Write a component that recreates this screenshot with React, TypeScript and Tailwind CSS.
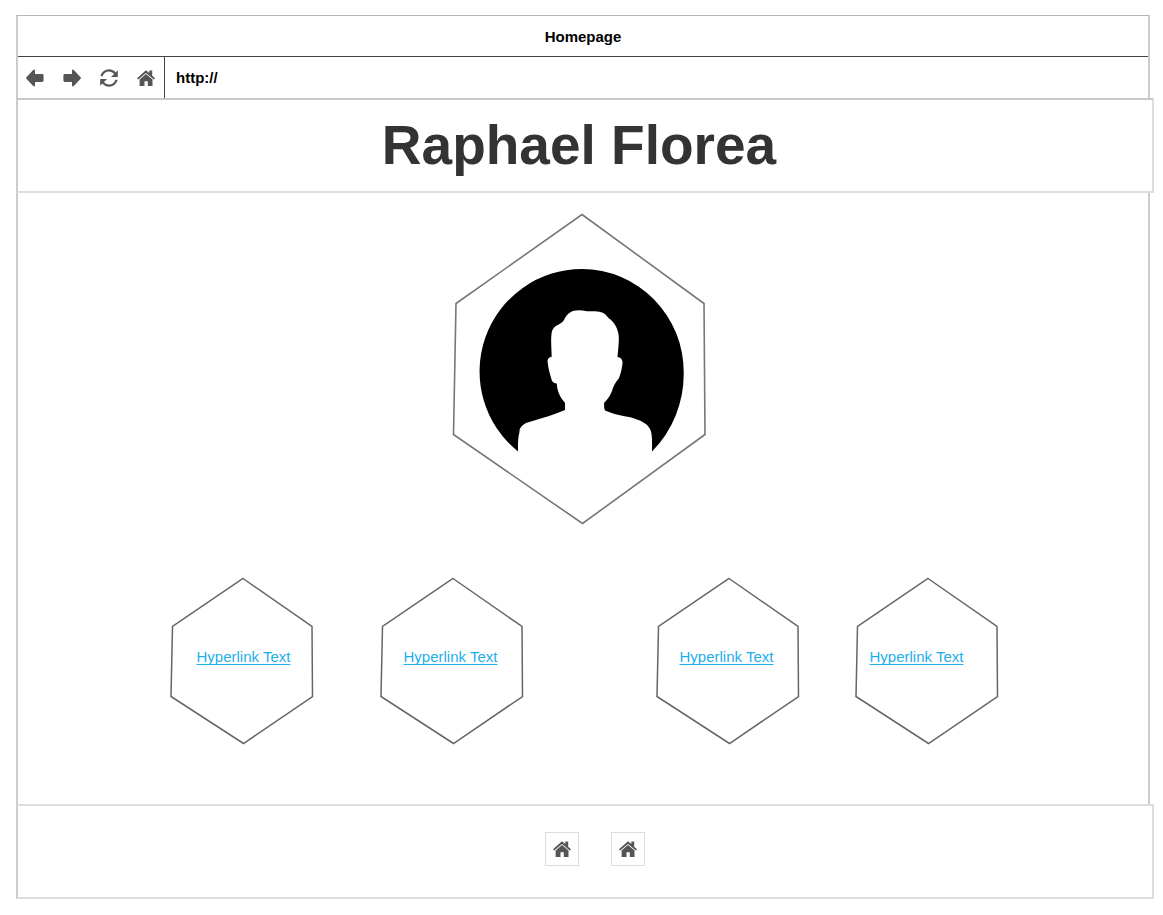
import React from "react";

type IconProps = { className?: string };

function ArrowIcon({ className }: IconProps) {
  return (
    <svg viewBox="0 0 18 18" className={className} fill="currentColor" aria-hidden="true">
      <path d="M.4 8.200 7.200.9Q8.800-.2 9 1.700V5H16.200a1.400 1.400 0 0 1 1.400 1.400V11.600a1.400 1.400 0 0 1-1.400 1.400H9v3.300Q8.800 18.200 7.200 17.100L.4 9.800Q-.2 9 .4 8.200z" />
    </svg>
  );
}

function RefreshIcon({ className }: IconProps) {
  return (
    <svg viewBox="0 0 18 18" className={className} aria-hidden="true">
      <g fill="none" stroke="currentColor" strokeWidth="2.200">
        <path d="M1.400 7.200C3 3 6 1.400 9 1.400S13.500 2.400 15.300 4.600" />
        <path d="M16.600 10.800C15 15 12 16.600 9 16.600S4.500 15.600 2.700 13.400" />
      </g>
      <path fill="currentColor" d="M17.800 1.200V8H11zM.2 16.800V10H7z" />
    </svg>
  );
}

function HomeIcon({ className }: IconProps) {
  return (
    <svg viewBox="0 0 18 18" className={className} fill="currentColor" aria-hidden="true">
      <path d="M9 1.200 12.300 4.100V1.500h2.900v5.200L18 9.200l-1.200 1.400L9 3.900l-7.800 6.700L0 9.200z" />
      <path d="M9 5 15.500 10.600V17H10.800V12.200H7.500V17H2.600v-6.400z" />
    </svg>
  );
}

function Avatar() {
  return (
    <svg viewBox="0 0 256 312" className="h-78 w-64" role="img" aria-label="Profile">
      <path
        d="M130 1.500 252 90.500 253 221.500 130.500 310.500 1.500 221.500 4 90.500z"
        fill="none"
        stroke="#777"
        strokeWidth="1.600"
      />
      <path d="M66 238.500A102.500 102.500 0 0 1 130 56A102 103 0 0 1 231.700 160A110 110 0 0 1 200 238.500C200 231 200.500 222 198.500 217 196 211 190 208 181 205 174 203 166 203 153 197.500 151.500 194 152.500 193 152 190 156 186 158.500 182 160 178 162 171 165 168 167 165 169 160 170.500 153 170.500 149Q170 144.500 165.500 144C166 137 167.500 127 166.500 121 165 113 161 108 156.500 105 151 97 144 98.500 135 98.300 123 95.500 116 98 112 107 108 113 101 111 99.500 121 98.700 127 99.500 136 99.700 143.700Q96 144 95.500 148C96 155 98 161 100 168Q102 170.500 104.700 170.500C105.500 180 109 185.500 113 189.700V197C102 201.500 91 205 79 208.500 71 210 67 215 67.500 219 65.800 225 66 232 66 238.500Z" />
    </svg>
  );
}

function HexLink({ className, linkClass }: { className: string; linkClass: string }) {
  return (
    <div className={`grid h-42 w-36 shrink-0 ${className}`}>
      <svg viewBox="0 0 144 168" className="col-start-1 row-start-1 h-42 w-36" aria-hidden="true">
        <path
          d="M73 1.500 142 49.500 142.500 119.500 73.500 166.500 1 119.500 2.500 49.500z"
          fill="none"
          stroke="#666"
          strokeWidth="1.500"
        />
      </svg>
      <a
        href="#"
        className={`col-start-1 row-start-1 mt-[70px] self-start justify-self-start text-[15px] leading-5 text-[#1eaeeb] underline underline-offset-2 [text-decoration-skip-ink:none] ${linkClass}`}
      >
        Hyperlink Text
      </a>
    </div>
  );
}

const navButton = "grid w-9 place-items-center";
const panel = "-mr-[6px] -ml-[2px] h-[95px] border-2 border-[#ddd] border-l-[#ccc] bg-white";

export default function App() {
  return (
    <div className="min-h-screen bg-white pt-[15px] pr-[13px] pb-4 pl-4 font-['Liberation_Sans',Arial,sans-serif] text-black">
      <div className="border-x-2 border-t border-x-[#ccc] border-t-[#b5b5b5]">
        <div className="flex h-10 items-center justify-center pt-0.5 text-[15px] font-bold">Homepage</div>
        <div className="flex h-[42px] border-t border-[#444]">
          <nav className="-ml-px flex gap-px border-r border-[#444] pt-px text-[#555]">
            <button type="button" aria-label="Back" className={navButton}>
              <ArrowIcon className="size-[18px]" />
            </button>
            <button type="button" aria-label="Forward" className={navButton}>
              <ArrowIcon className="size-[18px] rotate-180" />
            </button>
            <button type="button" aria-label="Reload" className={navButton}>
              <RefreshIcon className="size-[18px]" />
            </button>
            <button type="button" aria-label="Home" className={navButton}>
              <HomeIcon className="size-[18px]" />
            </button>
          </nav>
          <input
            type="text"
            aria-label="Address"
            defaultValue="http://"
            className="min-w-0 flex-1 px-[11px] pt-0.5 text-[15px] font-bold outline-none"
          />
        </div>

        <header className={`${panel} flex items-center justify-center border-t-[#c8c8c8]`}>
          <h1 className="pr-3 text-[55px] leading-none font-bold text-[#333]">Raphael Florea</h1>
        </header>

        <main className="flex flex-col items-center pt-5 pb-[59px]">
          <div className="pr-[6px]">
            <Avatar />
          </div>
          <div className="mt-[52px] flex pl-0.5">
            <HexLink className="mr-[66px]" linkClass="ml-[27px]" />
            <HexLink className="mr-[132px]" linkClass="ml-6" />
            <HexLink className="mr-[55px]" linkClass="ml-6" />
            <HexLink className="" linkClass="ml-[15px]" />
          </div>
        </main>

        <footer className={`${panel} flex items-center justify-center gap-8 pb-[6px] pl-5 text-[#555]`}>
          <a href="#" aria-label="Home" className="grid size-[34px] place-items-center border border-[#ddd]">
            <HomeIcon className="size-[18px]" />
          </a>
          <a href="#" aria-label="Home" className="grid size-[34px] place-items-center border border-[#ddd]">
            <HomeIcon className="size-[18px]" />
          </a>
        </footer>
      </div>
    </div>
  );
}
